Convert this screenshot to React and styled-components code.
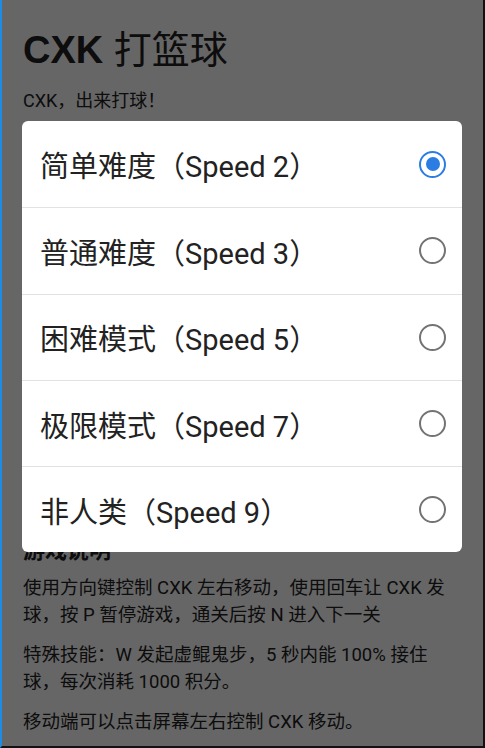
import React, { useState } from 'react'
import styled, { createGlobalStyle } from 'styled-components'

const GlobalStyle = createGlobalStyle`
  html, body {
    margin: 0;
    padding: 0;
    background: #fff;
  }
  body {
    font-family: Roboto, "Noto Sans CJK SC", sans-serif;
    color: #222;
  }
`;

const levels = [
  { name: '简单难度', speed: 2 },
  { name: '普通难度', speed: 3 },
  { name: '困难模式', speed: 5 },
  { name: '极限模式', speed: 7 },
  { name: '非人类', speed: 9 },
];

const App = () => {
  const [speed, setSpeed] = useState(2);

  return (
    <>
      <GlobalStyle />
      <Page>
        <Title>CXK <Han>打篮球</Han></Title>
        <Sub>CXK，出来打球！</Sub>
        <Spacer />
        <SectionTitle>游戏说明</SectionTitle>
        <Para>使用方向键控制 CXK 左右移动，使用回车让 CXK 发球，按 P 暂停游戏，通关后按 N 进入下一关</Para>
        <Para>特殊技能：W 发起虚鲲鬼步，5 秒内能 100% 接住球，每次消耗 1000 积分。</Para>
        <Para>移动端可以点击屏幕左右控制 CXK 移动。</Para>

        <Mask>
          <Dialog>
            {levels.map((l) => (
              <Option key={l.speed} onClick={() => setSpeed(l.speed)}>
                <span>{l.name}（Speed {l.speed}）</span>
                <Radio $on={speed === l.speed} />
              </Option>
            ))}
          </Dialog>
        </Mask>
      </Page>
    </>
  )
}

export default App;

const Page = styled.div`
  position: relative;
  box-sizing: border-box;
  height: 748px;
  overflow: hidden;
  padding: 22px 20px 0 21px;
  border-left: 2px solid #1d8ce6;
  border-right: 2px solid #121212;
  border-bottom: 2px solid #121212;
`;

const Title = styled.h1`
  margin: 0;
  font-family: "Liberation Sans", "Noto Sans CJK SC", sans-serif;
  font-size: 38px;
  line-height: 50px;
  font-weight: 700;
  color: #222;
`;

const Han = styled.span`
  font-family: "Noto Sans CJK SC", sans-serif;
  font-weight: 400;
`;

const Sub = styled.p`
  margin: 14px 0 0;
  font-size: 18px;
  line-height: 24px;
  color: #222;
`;

const Spacer = styled.div`
  height: 423px;
`;

const SectionTitle = styled.h2`
  margin: 0 0 9px;
  font-size: 22px;
  line-height: 30px;
  font-weight: 700;
  color: #222;
`;

const Para = styled.p`
  margin: 0 0 13px;
  font-size: 18.5px;
  line-height: 27px;
  color: #222;
`;

const Mask = styled.div`
  position: absolute;
  inset: 0;
  background: rgba(0, 0, 0, 0.6);
`;

const Dialog = styled.div`
  position: absolute;
  left: 20px;
  right: 21px;
  top: 121px;
  background: #fff;
  border-radius: 6px;
  overflow: hidden;
`;

const Option = styled.div`
  box-sizing: border-box;
  display: flex;
  align-items: center;
  justify-content: space-between;
  height: 86.3px;
  padding: 0 16px 0 18px;
  font-size: 29px;
  color: #222;
  cursor: pointer;
  & + & {
    border-top: 1px solid #e2e2e2;
  }
`;

const Radio = styled.span`
  box-sizing: border-box;
  width: 27px;
  height: 27px;
  border-radius: 50%;
  border: 2px solid ${p => (p.$on ? '#2b7de3' : '#737373')};
  display: flex;
  align-items: center;
  justify-content: center;
  &::after {
    content: '';
    width: 14px;
    height: 14px;
    border-radius: 50%;
    background: #2b7de3;
    display: ${p => (p.$on ? 'block' : 'none')};
  }
`;
